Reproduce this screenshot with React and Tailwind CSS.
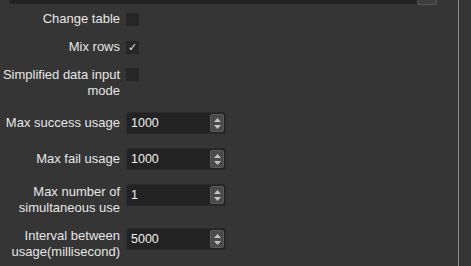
import React from "react";

function Check({ checked }) {
  return (
    <div className="w-[13px] h-[13px] bg-[#262626] flex items-center justify-center text-[#e0e0e0] text-[11px] leading-none">
      {checked ? "✓" : null}
    </div>
  );
}

function Spin({ value }) {
  return (
    <div className="w-[100px] h-[22px] bg-[#232323] rounded-[3px] flex items-stretch border border-[#2a2a2a]">
      <div className="flex-1 pl-[4px] flex items-center text-[#f0f0f0] text-[12.5px]">{value}</div>
      <div className="w-[14px] my-[1px] mr-[1px] bg-[#4a4a4a] border border-[#5c5c5c] rounded-[2px] flex flex-col items-center justify-center gap-[3px]">
        <svg width="7" height="4" viewBox="0 0 7 4"><path d="M3.5 0L7 4H0Z" fill="#c4c4c4" /></svg>
        <svg width="7" height="4" viewBox="0 0 7 4"><path d="M0 0H7L3.5 4Z" fill="#c4c4c4" /></svg>
      </div>
    </div>
  );
}

function Label({ children }) {
  return <div className="w-[120px] shrink-0 text-right leading-[16px] text-[13px]">{children}</div>;
}

export default function App() {
  return (
    <div
      className="w-[471px] h-[266px] bg-[#353535] text-[#e6e6e6] overflow-hidden flex"
      style={{ fontFamily: '"Liberation Sans", Arial, sans-serif' }}
    >
      <div className="w-[458px] shrink-0 flex flex-col">
        <div className="h-[4px] ml-[9px] w-[428px] bg-[#232323] rounded-b-[3px] flex justify-end">
          <div className="w-[20px] h-[5px] bg-[#3d3d3d] border border-t-0 border-[#575757] rounded-b-[3px]" />
        </div>
        <div className="mt-[6px] h-[18px] flex items-center gap-[6px]">
          <Label>Change table</Label>
          <Check />
        </div>
        <div className="mt-[10px] h-[18px] flex items-center gap-[6px]">
          <Label>Mix rows</Label>
          <Check checked />
        </div>
        <div className="mt-[11px] flex items-start gap-[6px]">
          <Label>Simplified data input mode</Label>
          <div className="mt-[1px]"><Check /></div>
        </div>
        <div className="mt-[13px] h-[22px] flex items-center gap-[6px]">
          <Label>Max success usage</Label>
          <Spin value="1000" />
        </div>
        <div className="mt-[14px] h-[22px] flex items-center gap-[6px]">
          <Label>Max fail usage</Label>
          <Spin value="1000" />
        </div>
        <div className="mt-[14px] flex items-start gap-[6px]">
          <Label>Max number of simultaneous use</Label>
          <Spin value="1" />
        </div>
        <div className="mt-[12px] flex items-start gap-[6px]">
          <Label>Interval between usage(millisecond)</Label>
          <Spin value="5000" />
        </div>
      </div>
      <div className="w-px h-full bg-[#8a8a8a]" />
    </div>
  );
}
